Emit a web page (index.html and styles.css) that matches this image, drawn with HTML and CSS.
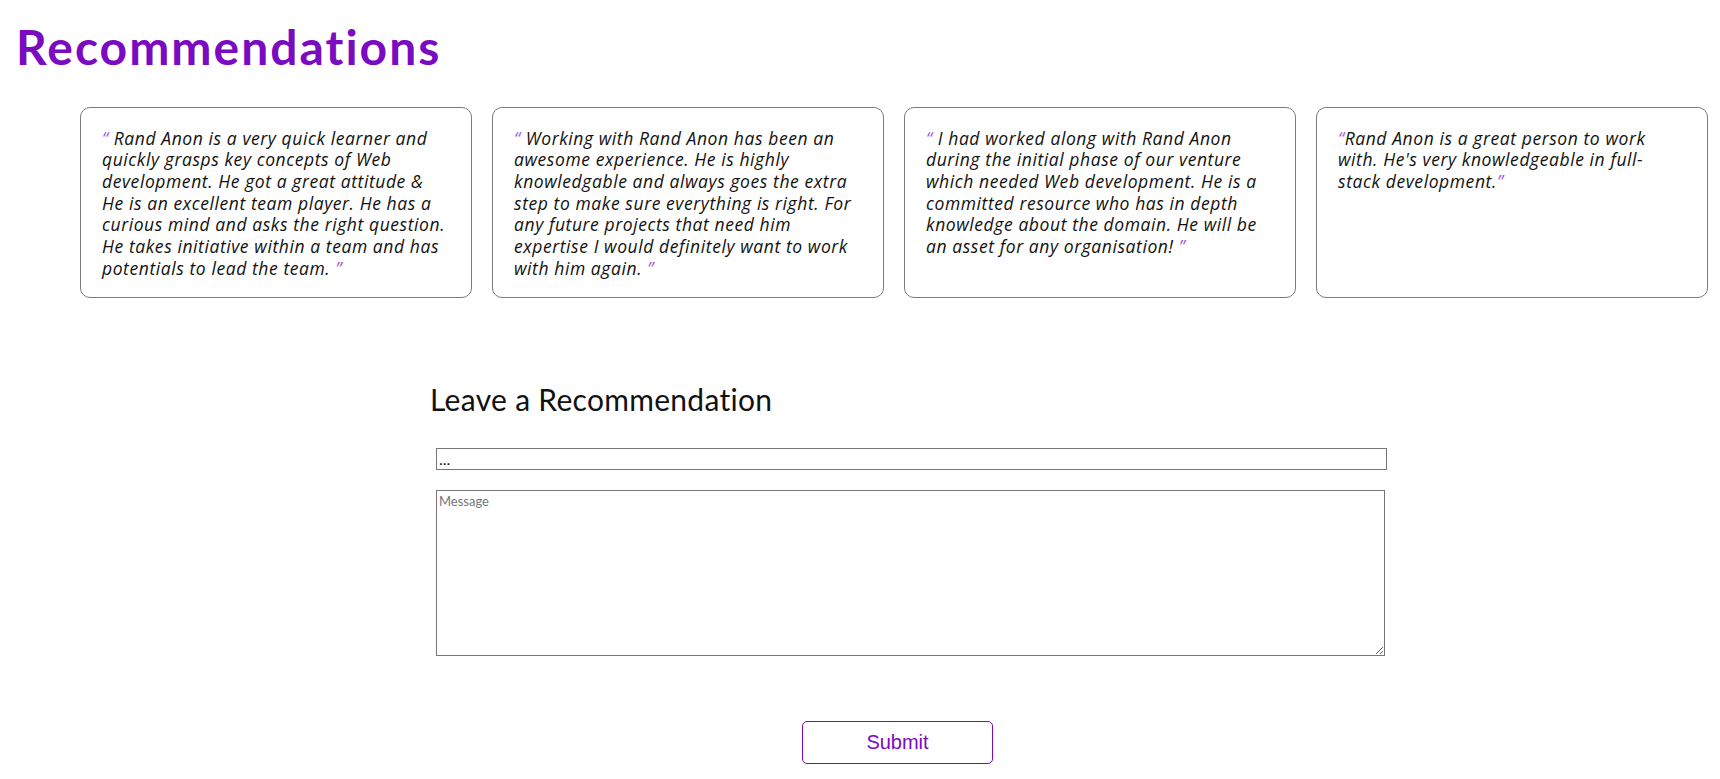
FILE: index.html
```html
<!DOCTYPE html>
<html lang="en">
<head>
<meta charset="utf-8">
<title>Recommendations</title>
<link rel="stylesheet" href="styles.css">
</head>
<body>
<h1 class="title">Recommendations</h1>
<div class="cards">
  <div class="card"><span class="q">“</span> Rand Anon is a very quick learner and quickly grasps key concepts of Web development. He got a great attitude &amp; He is an excellent team player. He has a curious mind and asks the right question. He takes initiative within a team and has potentials to lead the team. <span class="q">”</span></div>
  <div class="card"><span class="q">“</span> Working with Rand Anon has been an awesome experience. He is highly knowledgable and always goes the extra step to make sure everything is right. For any future projects that need him expertise I would definitely want to work with him again. <span class="q">”</span></div>
  <div class="card"><span class="q">“</span> I had worked along with Rand Anon during the initial phase of our venture which needed Web development. He is a committed resource who has in depth knowledge about the domain. He will be an asset for any organisation! <span class="q">”</span></div>
  <div class="card"><span class="q">“</span>Rand Anon is a great person to work with. He's very knowledgeable in full-stack development.<span class="q">”</span></div>
</div>
<section class="leave">
  <h2 class="leave-title">Leave a Recommendation</h2>
  <input class="name-input" type="text" value="...">
  <textarea class="msg" placeholder="Message"></textarea>
  <div class="actions"><button class="submit" type="button">Submit</button></div>
</section>
</body>
</html>
```
FILE: styles.css
```css
html, body {
  margin: 0;
  padding: 0;
  background: #ffffff;
}
body {
  font-family: Lato, "Liberation Sans", sans-serif;
  color: #111;
}
.title {
  margin: 0;
  padding: 18px 0 0 16px;
  font-size: 48px;
  line-height: 57.6px;
  font-weight: 700;
  letter-spacing: 2px;
  color: #7a0bc0;
}
.cards {
  display: flex;
  gap: 20px;
  padding-left: 80px;
  margin-top: 31px;
}
.card {
  flex: 0 0 392px;
  box-sizing: border-box;
  border: 1px solid #7c7c7c;
  border-radius: 10px;
  padding: 20px 24px 17px 21px;
  font-family: "Open Sans", "Noto Sans", sans-serif;
  font-style: italic;
  font-size: 17.5px;
  line-height: 21.7px;
  letter-spacing: 0.58px;
  color: #111;
}
.q {
  color: #9a5ae0;
}
.leave {
  margin-left: 430px;
  width: 935px;
  display: flex;
  flex-direction: column;
  align-items: flex-start;
  padding-top: 83px;
}
.leave-title {
  margin: 0;
  font-size: 30px;
  line-height: 36px;
  font-weight: 400;
  letter-spacing: 0.3px;
  color: #111;
}
.name-input {
  margin: 31px 0 0 6px;
  width: 951px;
  height: 22px;
  box-sizing: border-box;
  border: 1px solid #767676;
  padding: 0 2px;
  font-family: Lato, sans-serif;
  font-size: 16px;
  color: #222;
}
.msg {
  margin: 20px 0 0 6px;
  width: 949px;
  height: 166px;
  box-sizing: border-box;
  border: 1px solid #767676;
  padding: 2px;
  font-family: Lato, sans-serif;
  font-size: 13px;
}
.msg::placeholder {
  color: #757575;
}
.actions {
  align-self: stretch;
  display: flex;
  justify-content: center;
  margin-top: 65px;
}
.submit {
  width: 191px;
  height: 43px;
  background: #fff;
  border: 1px solid #7a0bc0;
  border-radius: 5px;
  color: #7a0bc0;
  font-family: "Liberation Sans", Arial, sans-serif;
  font-size: 20px;
}
```
